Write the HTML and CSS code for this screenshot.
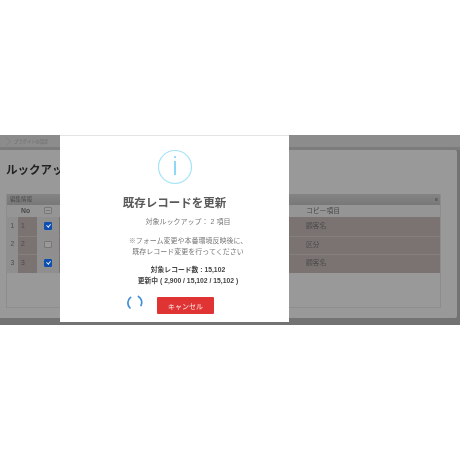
FILE: index.html
```html
<!DOCTYPE html>
<html lang="ja">
<head>
<meta charset="utf-8">
<title>既存レコードを更新</title>
<link rel="stylesheet" href="styles.css">
</head>
<body>
<div class="shot">
  <div class="app">
    <div class="crumbs"><span class="chev"></span><span>プラグインの設定</span></div>
    <div class="panel">
      <h1 class="title">ルックアップ更新</h1>
      <div class="tablebox">
        <div class="tablehead"><span>編集情報</span><span class="collapse">≡</span></div>
        <div class="row headrow">
          <div class="c-idx"></div><div class="c-no">No</div><div class="c-chk"><span class="box minus"></span></div><div class="c-mid"></div><div class="c-copy">コピー項目</div>
        </div>
        <div class="row datarow">
          <div class="c-idx">1</div><div class="c-no tint">1</div><div class="c-chk"><span class="box on"></span></div><div class="c-mid tint"></div><div class="c-copy tint">顧客名</div>
        </div>
        <div class="row datarow">
          <div class="c-idx">2</div><div class="c-no tint">2</div><div class="c-chk"><span class="box"></span></div><div class="c-mid tint"></div><div class="c-copy tint">区分</div>
        </div>
        <div class="row datarow">
          <div class="c-idx">3</div><div class="c-no tint">3</div><div class="c-chk"><span class="box on"></span></div><div class="c-mid tint"></div><div class="c-copy tint">顧客名</div>
        </div>
      </div>
    </div>
    <div class="modal">
      <svg class="info" viewBox="0 0 36 36" width="36" height="36">
        <circle cx="18" cy="18" r="16.5" fill="none" stroke="#a5e3f8" stroke-width="1.2"/>
        <rect x="17.3" y="7.2" width="1.4" height="1.8" fill="#5cc8f2"/>
        <rect x="17.3" y="12" width="1.4" height="14" fill="#5cc8f2"/>
      </svg>
      <h2 class="mtitle">既存レコードを更新</h2>
      <div class="details">
        <p class="target">対象ルックアップ： 2 項目</p>
        <p class="note">※フォーム変更や本番環境反映後に、<br>既存レコード変更を行ってください</p>
        <p class="count">対象レコード数 : 15,102<br>更新中 ( 2,900 / 15,102 / 15,102 )</p>
      </div>
      <div class="actions">
        <svg class="spinner" viewBox="0 0 18 18" width="18" height="18">
          <path d="M4.6 3.4 A7 7 0 0 0 4 14" fill="none" stroke="#3f8fd8" stroke-width="1.7" stroke-linecap="round"/>
          <path d="M12.4 2.4 A7 7 0 0 1 15 11.6" fill="none" stroke="#3f8fd8" stroke-width="1.7" stroke-linecap="round"/>
        </svg>
        <button class="cancel" type="button">キャンセル</button>
      </div>
    </div>
  </div>
</div>
</body>
</html>
```
FILE: styles.css
```css
html, body {
  margin: 0;
  padding: 0;
  background: #fff;
}
body {
  height: 460px;
  overflow: hidden;
  font-family: "Liberation Sans", "Noto Sans CJK JP", sans-serif;
}
.shot {
  padding-top: 135px;
  filter: blur(0.45px);
}
.app {
  position: relative;
  height: 190px;
  overflow: hidden;
  background: #737373;
  display: flex;
  flex-direction: column;
}
.crumbs {
  height: 12px;
  background: #8c8c8c;
  color: #6c6c6c;
  font-size: 4.3px;
  line-height: 11px;
  display: flex;
  align-items: center;
  gap: 4px;
  flex: none;
  border-bottom: 3px solid #7c7c7c;
}
.chev {
  width: 6px;
  height: 6px;
  margin-left: 3px;
  border-top: 1px solid #848484;
  border-right: 1px solid #848484;
  transform: rotate(45deg) scale(0.9);
  flex: none;
}
.panel {
  margin-right: 3px;
  flex: 1;
  background: #999;
  margin-bottom: 7px;
  padding: 12px 6px 0;
  display: flex;
  flex-direction: column;
  min-height: 0;
  border-radius: 0 2px 2px 0;
}
.title {
  margin: 0 0 16px;
  font-size: 11.5px;
  line-height: 16px;
  font-weight: 700;
  color: #222;
  white-space: nowrap;
}
.tablebox {
  width: 435px;
  height: 114px;
  flex: none;
  border: 1px solid #8d8d8d;
  border-top: 0;
  box-sizing: border-box;
}
.tablehead {
  height: 11px;
  background: linear-gradient(#848484, #787878);
  color: #484848;
  font-size: 5.5px;
  line-height: 10px;
  display: flex;
  justify-content: space-between;
  padding: 0 2px 0 3px;
}
.row {
  display: flex;
  align-items: center;
}
.headrow {
  height: 12px;
  background: #959595;
  color: #484848;
  font-size: 6.8px;
  font-weight: 700;
}
.datarow {
  height: 18.5px;
  color: #4c4c4c;
  font-size: 6.8px;
}
.datarow + .datarow .tint {
  box-shadow: inset 0 1px 0 #857f7d;
}
.c-idx {
  width: 11px;
  align-self: stretch;
  display: flex;
  align-items: center;
  justify-content: center;
  padding-bottom: 2px;
  box-sizing: border-box;
  background: #8f8f8f;
}
.c-no {
  width: 19px;
  align-self: stretch;
  display: flex;
  align-items: center;
  padding: 0 0 2px 3px;
  box-sizing: border-box;
}
.c-chk {
  width: 22px;
  align-self: stretch;
  display: flex;
  align-items: center;
  justify-content: center;
  padding-bottom: 1px;
  box-sizing: border-box;
  background: #8f8f8f;
}
.c-mid {
  width: 241px;
  align-self: stretch;
}
.c-copy {
  flex: 1;
  align-self: stretch;
  display: flex;
  align-items: center;
  padding: 0 0 2px 6px;
  box-sizing: border-box;
}
.headrow .c-idx, .headrow .c-chk { background: transparent; }
.headrow .c-copy { font-weight: 400; }
.tint { background: #7a7371; }
.box {
  width: 5.5px;
  height: 5.5px;
  border: 1px solid #777;
  border-radius: 1px;
  background: #999;
  display: block;
  position: relative;
}
.box.on {
  background: #0d4fb0;
  border-color: #0d4fb0;
}
.box.on::after {
  content: "";
  position: absolute;
  left: 1.6px;
  top: -0.2px;
  width: 1.6px;
  height: 3.4px;
  border-right: 1px solid #e8e8e8;
  border-bottom: 1px solid #e8e8e8;
  transform: rotate(40deg);
}
.box.minus {
  background: linear-gradient(#777, #777) center / 4px 1px no-repeat, #999;
}
.modal {
  position: absolute;
  left: 60px;
  top: 0;
  width: 229px;
  height: 187px;
  background: #fff;
  border-top: 1px solid #e4e4e4;
  box-sizing: border-box;
  display: flex;
  flex-direction: column;
  align-items: center;
  text-align: center;
  padding-top: 13px;
  color: #777;
}
.info { flex: none; }
.mtitle {
  margin: 9px 0 0;
  font-size: 11.5px;
  line-height: 18px;
  font-weight: 700;
  color: #595959;
}
.details {
  padding-left: 27px;
}
.target {
  margin: 4px 0 0;
  font-size: 7px;
  line-height: 12px;
}
.note {
  margin: 6.5px 0 0;
  font-size: 7px;
  line-height: 11px;
}
.count {
  margin: 7px 0 0;
  font-size: 6.8px;
  line-height: 11px;
  font-weight: 700;
  color: #444;
}
.actions {
  margin-top: 11.5px;
  display: flex;
  align-items: center;
  gap: 13px;
  margin-left: -9px;
}
.spinner { margin-top: -6px; flex: none; }
.cancel {
  width: 57px;
  height: 17px;
  border: 0;
  border-radius: 1px;
  padding: 0;
  background: #e03434;
  color: #f6d0d0;
  font: 500 7px "Noto Sans CJK JP", sans-serif;
}
```
